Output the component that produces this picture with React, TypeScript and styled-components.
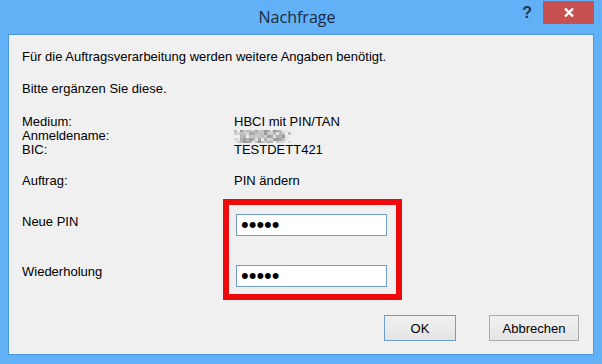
import React from 'react';
import styled, { createGlobalStyle } from 'styled-components';

const GlobalStyle = createGlobalStyle`
  html,
  body {
    margin: 0;
    padding: 0;
  }

  body {
    width: 602px;
    height: 364px;
    overflow: hidden;
    font-family: 'Liberation Sans', Arial, sans-serif;
  }
`;

const Window = styled.div`
  width: 602px;
  height: 364px;
  box-sizing: border-box;
  background: #62b0f6;
  display: flex;
  flex-direction: column;
`;

const TitleBar = styled.div`
  height: 34px;
  flex-shrink: 0;
  display: grid;
  grid-template-columns: 1fr auto 1fr;
  padding-right: 8px;
`;

const Title = styled.div`
  grid-column: 2;
  padding-top: 7px;
  font-family: 'Open Sans', 'Noto Sans', sans-serif;
  font-size: 16px;
  line-height: 21px;
  color: #1c2b3c;
`;

const Controls = styled.div`
  grid-column: 3;
  display: flex;
  justify-content: flex-end;
  align-items: flex-start;
  gap: 11px;
`;

const HelpButton = styled.div`
  margin-top: 5px;
  font-family: 'Liberation Sans', Arial, sans-serif;
  font-weight: bold;
  font-size: 16px;
  line-height: 16px;
  color: #1b3556;
`;

const CloseButton = styled.div`
  width: 51px;
  height: 23px;
  margin-top: 1px;
  background: #c75050;
  display: flex;
  align-items: center;
  justify-content: center;
`;

const Client = styled.div`
  flex: 1;
  margin: 0 8px 9px 8px;
  border: 1px solid #4d97dc;
  background: #f0f0f0;
  display: flex;
  flex-direction: column;
  padding: 15px 14px 13px 13px;
  font-size: 13px;
  line-height: 14px;
  color: #000;
`;

const Paragraph = styled.div<{ $gap?: number }>`
  margin-top: ${(p) => p.$gap ?? 0}px;
  white-space: nowrap;
`;

const InfoGrid = styled.div<{ $gap: number }>`
  margin-top: ${(p) => p.$gap}px;
  display: grid;
  grid-template-columns: 212px 1fr;
  grid-auto-rows: 14px;
`;

const Value = styled.div`
  display: flex;
  align-items: center;
`;

const PinSection = styled.div`
  margin-top: 11px;
  display: flex;
`;

const PinLabels = styled.div`
  width: 201px;
  padding-top: 16px;
  display: flex;
  flex-direction: column;
  gap: 36px;
`;

const Highlight = styled.div`
  width: 179px;
  box-sizing: border-box;
  border: 6px solid #ec0a0c;
  padding: 9px 9px 7px 7px;
  display: flex;
  flex-direction: column;
  gap: 29px;
`;

const PinInput = styled.input`
  width: 151px;
  height: 22px;
  box-sizing: border-box;
  margin: 0;
  border: 1px solid #6f9dc6;
  background: #fff;
  padding: 0 4px;
  font-family: 'Liberation Sans', Arial, sans-serif;
  font-size: 22px;
  letter-spacing: 0;
  color: #000;
  outline: none;
`;

const ButtonRow = styled.div`
  margin-top: auto;
  display: flex;
  justify-content: flex-end;
  gap: 33px;
`;

const DialogButton = styled.button<{ $default?: boolean; $width: number }>`
  width: ${(p) => p.$width}px;
  height: 26px;
  box-sizing: border-box;
  margin: 0;
  padding: 0;
  border: 1px solid ${(p) => (p.$default ? '#6f9fcf' : '#acacac')};
  background: linear-gradient(#f0f0f0, #e5e5e5);
  font-family: 'Liberation Sans', Arial, sans-serif;
  font-size: 13px;
  color: #000;
`;

const Blurred: React.FC = () => {
  const cells: React.ReactNode[] = [];
  const cols = 19;
  const rows = 5;
  for (let y = 0; y < rows; y++) {
    for (let x = 0; x < cols; x++) {
      const n = Math.abs(Math.sin(x * 12.9898 + y * 78.233) * 43758.5453) % 1;
      const edge = x < 2 || x > cols - 3 ? 40 : 0;
      const c = Math.min(Math.round(150 + n * 90 + edge), 240);
      cells.push(
        <rect key={`${x}-${y}`} x={x * 3} y={y * 3 - 1} width={3} height={3} fill={`rgb(${c},${c},${c})`} />
      );
    }
  }
  return (
    <svg width="57" height="13" viewBox="0 0 57 13">
      {cells}
    </svg>
  );
};

export default function App() {
  return (
    <>
      <GlobalStyle />
      <Window>
        <TitleBar>
          <Title>Nachfrage</Title>
          <Controls>
            <HelpButton>?</HelpButton>
            <CloseButton>
              <svg width="10" height="9" viewBox="0 0 10 9">
                <path d="M1 0.5 L9 8.5 M9 0.5 L1 8.5" stroke="#fff" strokeWidth="2.4" />
              </svg>
            </CloseButton>
          </Controls>
        </TitleBar>
        <Client>
          <Paragraph>Für die Auftragsverarbeitung werden weitere Angaben benötigt.</Paragraph>
          <Paragraph $gap={18}>Bitte ergänzen Sie diese.</Paragraph>
          <InfoGrid $gap={19}>
            <div>Medium:</div>
            <Value>HBCI mit PIN/TAN</Value>
            <div>Anmeldename:</div>
            <Value>
              <Blurred />
            </Value>
            <div>BIC:</div>
            <Value>TESTDETT421</Value>
          </InfoGrid>
          <InfoGrid $gap={17}>
            <div>Auftrag:</div>
            <Value>PIN ändern</Value>
          </InfoGrid>
          <PinSection>
            <PinLabels>
              <div>Neue PIN</div>
              <div>Wiederholung</div>
            </PinLabels>
            <Highlight>
              <PinInput type="password" defaultValue="12345" readOnly />
              <PinInput type="password" defaultValue="12345" readOnly />
            </Highlight>
          </PinSection>
          <ButtonRow>
            <DialogButton $default $width={72}>OK</DialogButton>
            <DialogButton $width={90}>Abbrechen</DialogButton>
          </ButtonRow>
        </Client>
      </Window>
    </>
  );
}
